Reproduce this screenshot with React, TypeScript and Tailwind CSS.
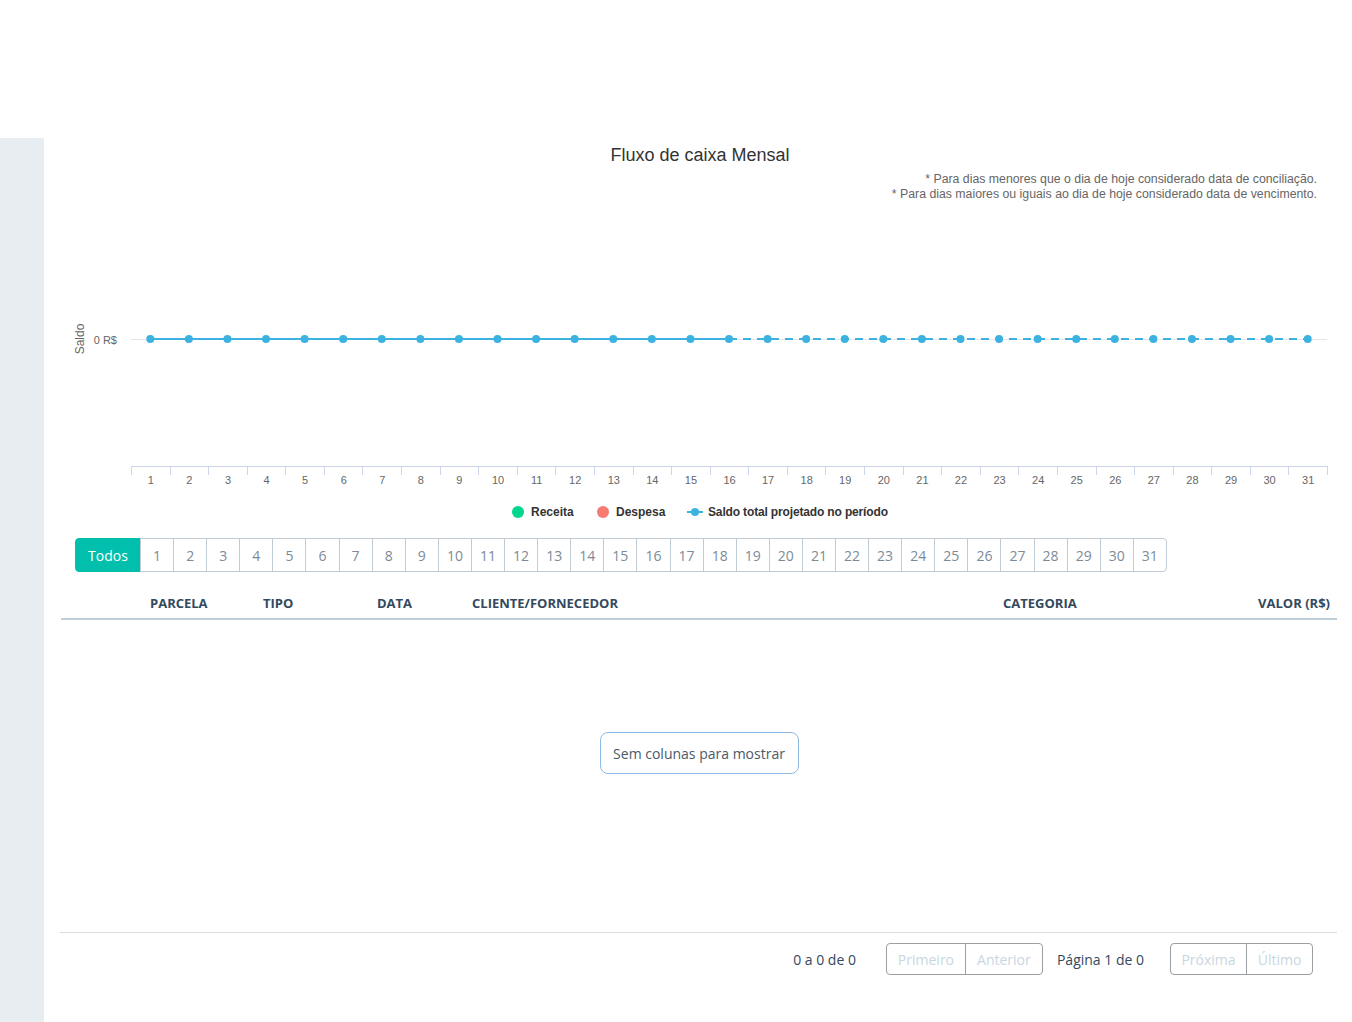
import React from "react";

const DAYS = Array.from({ length: 31 }, (_, i) => i + 1);

// plot area in svg coords (page x - 60, page y - 138)
const PLOT_LEFT = 71;
const PLOT_WIDTH = 1196;
const STEP = PLOT_WIDTH / 31;
const ZERO_Y = 201;
const AXIS_Y = 328;
const TODAY_INDEX = 15;

const px = (i: number) => PLOT_LEFT + (i + 0.5) * STEP;

function CashFlowChart() {
  const solid = DAYS.slice(0, TODAY_INDEX + 1).map((_, i) => `${px(i)},${ZERO_Y}`).join(" ");
  const dashed = DAYS.slice(TODAY_INDEX).map((_, i) => `${px(i + TODAY_INDEX)},${ZERO_Y}`).join(" ");

  return (
    <svg width={1277} height={400} className="block font-['Liberation_Sans',Arial,sans-serif]">
      <text x={640} y={23} textAnchor="middle" fontSize={18} fill="#333">
        Fluxo de caixa Mensal
      </text>
      <text x={1257} y={45} textAnchor="end" fontSize={12.3} fill="#666">
        * Para dias menores que o dia de hoje considerado data de conciliação.
      </text>
      <text x={1257} y={60} textAnchor="end" fontSize={12.3} fill="#666">
        * Para dias maiores ou iguais ao dia de hoje considerado data de vencimento.
      </text>

      <text
        x={0}
        y={0}
        transform={`translate(24 ${ZERO_Y}) rotate(-90)`}
        textAnchor="middle"
        fontSize={12}
        fill="#666"
      >
        Saldo
      </text>
      <text x={57} y={ZERO_Y + 5} textAnchor="end" fontSize={11} fill="#666">
        0 R$
      </text>

      <line x1={PLOT_LEFT} x2={PLOT_LEFT + PLOT_WIDTH} y1={ZERO_Y + 0.5} y2={ZERO_Y + 0.5} stroke="#e6e6e6" />

      <line x1={PLOT_LEFT} x2={PLOT_LEFT + PLOT_WIDTH} y1={AXIS_Y + 0.5} y2={AXIS_Y + 0.5} stroke="#ccd6eb" />
      {Array.from({ length: 32 }, (_, k) => {
        const x = Math.round(PLOT_LEFT + k * STEP) + 0.5;
        return <line key={k} x1={x} x2={x} y1={AXIS_Y} y2={AXIS_Y + 9} stroke="#ccd6eb" />;
      })}
      {DAYS.map((d, i) => (
        <text key={d} x={px(i) + 0.5} y={AXIS_Y + 18} textAnchor="middle" fontSize={11} fill="#666">
          {d}
        </text>
      ))}

      <polyline points={solid} fill="none" stroke="#3cb2e0" strokeWidth={2} />
      <polyline points={dashed} fill="none" stroke="#3cb2e0" strokeWidth={2} strokeDasharray="8 6" />
      {DAYS.map((d, i) => (
        <circle key={d} cx={px(i)} cy={ZERO_Y} r={4} fill="#3cb2e0" />
      ))}

      <g fontSize={12} fontWeight={700} fill="#333">
        <circle cx={458} cy={374} r={6} fill="#00d68f" />
        <text x={471} y={378}>Receita</text>
        <circle cx={543} cy={374} r={6} fill="#f77b72" />
        <text x={556} y={378}>Despesa</text>
        <line x1={627} x2={643} y1={374} y2={374} stroke="#3cb2e0" strokeWidth={2} />
        <circle cx={635} cy={374} r={4} fill="#3cb2e0" />
        <text x={648} y={378} textLength={180}>Saldo total projetado no período</text>
      </g>
    </svg>
  );
}

function DayFilter() {
  return (
    <div className="ml-[15px] flex h-[34px] text-[14px]">
      <button
        type="button"
        className="w-[66px] rounded-l border border-[#00bfad] bg-[#00bfad] text-white"
      >
        Todos
      </button>
      {DAYS.map((d) => (
        <button
          key={d}
          type="button"
          className={`-ml-px w-[34.1px] border border-[#c0ccd6] bg-white text-[#7b8b99] ${
            d === 31 ? "rounded-r" : ""
          }`}
        >
          {d}
        </button>
      ))}
    </div>
  );
}

function Pager() {
  return (
    <div className="flex items-center justify-end pr-[24px] pt-[10px] text-[14px] text-[#34495e]">
      <span>0 a 0 de 0</span>
      <div className="ml-[30px] flex h-[32px] rounded border border-[#9aa0a4]">
        <button type="button" className="w-[78px] text-[#c8d6e2]">Primeiro</button>
        <button type="button" className="w-[77px] border-l border-[#9aa0a4] text-[#c8d6e2]">Anterior</button>
      </div>
      <span className="ml-[14px]">Página 1 de 0</span>
      <div className="ml-[26px] flex h-[32px] rounded border border-[#9aa0a4]">
        <button type="button" className="w-[75px] text-[#c8d6e2]">Próxima</button>
        <button type="button" className="w-[66px] border-l border-[#9aa0a4] text-[#c8d6e2]">Último</button>
      </div>
    </div>
  );
}

export default function App() {
  return (
    <div className="min-h-[1022px] bg-white font-['Open_Sans',sans-serif]">
      <div className="h-[138px]" />
      <div className="flex min-h-[884px]">
        <aside className="w-[44px] shrink-0 bg-[#e8edf1]" />
        <main className="flex-1 pl-[16px] pr-[15px]">
          <CashFlowChart />
          <DayFilter />

          <div className="ml-px mt-[14px]">
            <div className="grid h-[34px] grid-cols-[89px_113px_114px_95px_531px_1fr_auto] items-center border-b-2 border-[#bfcfd9] pt-[4px] text-[13px] font-bold uppercase text-[#34495e]">
              <span />
              <span>Parcela</span>
              <span>Tipo</span>
              <span>Data</span>
              <span>Cliente/Fornecedor</span>
              <span>Categoria</span>
              <span className="pr-[7px]">Valor (R$)</span>
            </div>
            <div className="flex h-[312px] justify-center">
              <div className="mt-[112px] flex h-[42px] w-[199px] items-center justify-center rounded-lg border border-[#8fbbe3] text-[14px] text-[#4a5a6a]">
                Sem colunas para mostrar
              </div>
            </div>
          </div>

          <div className="border-t border-[#dddddd]">
            <Pager />
          </div>
        </main>
      </div>
    </div>
  );
}
